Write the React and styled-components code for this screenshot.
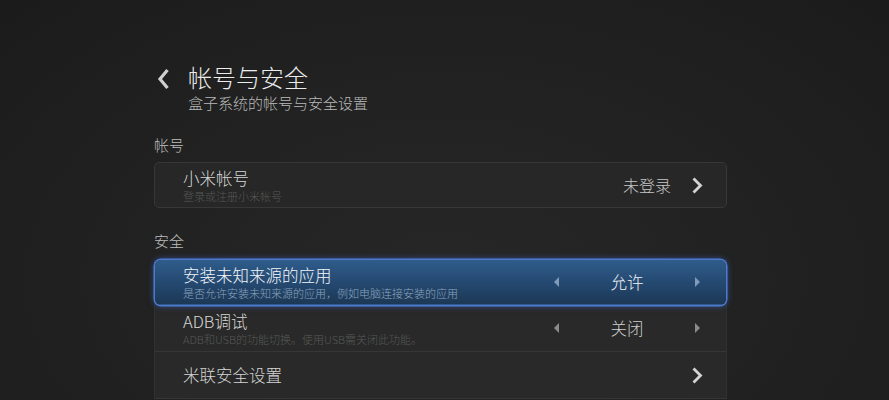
import React from "react";
import styled, { createGlobalStyle } from "styled-components";

const GlobalStyle = createGlobalStyle`
  html, body {
    margin: 0;
    padding: 0;
    background: #1f201f;
  }
  body {
    font-family: "Noto Sans CJK SC", "Noto Sans", sans-serif;
    font-weight: 300;
  }
`;

const Screen = styled.div`
  width: 889px;
  height: 400px;
  overflow: hidden;
  background: radial-gradient(ellipse at 50% 70%, #262726 0%, #202120 55%, #1a1b1a 100%);
  box-sizing: border-box;
  padding: 62px 0 0 154px;
`;

const Content = styled.div`
  width: 573px;
  display: flex;
  flex-direction: column;
`;

const Header = styled.div`
  display: flex;
  align-items: flex-start;
  gap: 18px;
  margin-left: 3px;
`;

const BackIcon = styled.svg`
  width: 13px;
  height: 22px;
  margin-top: 6px;
`;

const HeaderText = styled.div`
  display: flex;
  flex-direction: column;
`;

const Title = styled.div`
  font-size: 24px;
  line-height: 30px;
  color: #ececec;
`;

const Subtitle = styled.div`
  font-size: 15px;
  line-height: 20px;
  color: #b9b9b9;
  margin-top: 1px;
`;

const SectionLabel = styled.div`
  font-size: 15px;
  line-height: 20px;
  color: #bdbdbd;
  margin-top: ${(p) => p.$top || "22px"};
  margin-bottom: ${(p) => p.$bottom || "7px"};
`;

const Card = styled.div`
  display: flex;
  align-items: center;
  height: 46px;
  box-sizing: border-box;
  padding: 0 23px 0 28px;
  background: #262726;
  border: 1px solid #363736;
  border-radius: 5px;
`;

const Group = styled.div`
  display: flex;
  flex-direction: column;
  background: #282928;
  border-left: 1px solid #303130;
  border-right: 1px solid #303130;
`;

const Row = styled.div`
  display: flex;
  align-items: center;
  height: ${(p) => (p.$focused ? "45px" : "47px")};
  box-sizing: border-box;
  padding: 0 23px 0 28px;
  border-bottom: 1px solid ${(p) => (p.$focused ? "transparent" : "#353635")};
  border-radius: ${(p) => (p.$focused ? "6px" : "0")};
  background: ${(p) =>
    p.$focused
      ? "linear-gradient(180deg, #2f5c8b 0%, #24486f 55%, #1c3856 100%)"
      : "transparent"};
  box-shadow: ${(p) =>
    p.$focused
      ? "0 0 0 1.5px #4b7ad0, 0 0 6px 1px rgba(70, 110, 230, 0.6)"
      : "none"};
  position: relative;
  z-index: ${(p) => (p.$focused ? 1 : 0)};
`;

const Texts = styled.div`
  flex: 1;
  display: flex;
  flex-direction: column;
`;

const ItemTitle = styled.div`
  font-size: 16.5px;
  line-height: 20px;
  color: ${(p) => (p.$focused ? "#f4f6f8" : "#d6d6d6")};
`;

const ItemSub = styled.div`
  font-size: 11px;
  line-height: 14px;
  margin-top: 1px;
  color: ${(p) => (p.$focused ? "#8ea4bd" : "#575857")};
`;

const Status = styled.div`
  font-size: 16px;
  color: #c8c8c8;
  margin-right: 20px;
`;

const Chevron = styled.svg`
  width: 12px;
  height: 17px;
`;

const Selector = styled.div`
  display: flex;
  align-items: center;
  justify-content: space-between;
  width: 146px;
  margin-right: 3px;
`;

const Value = styled.div`
  font-size: 16.5px;
  color: ${(p) => (p.$focused ? "#f2f4f6" : "#cfcfcf")};
`;

const Arrow = styled.svg`
  width: 5px;
  height: 10px;
`;

const ChevronRight = () => (
  <Chevron viewBox="0 0 12 17">
    <path d="M2.5 1.5 L9.5 8.5 L2.5 15.5" fill="none" stroke="#d4d4d4" strokeWidth="2.8" />
  </Chevron>
);

const SelectArrow = ({ dir, color }) => (
  <Arrow viewBox="0 0 5 10">
    {dir === "left" ? (
      <path d="M5 0 L0 5 L5 10 Z" fill={color} />
    ) : (
      <path d="M0 0 L5 5 L0 10 Z" fill={color} />
    )}
  </Arrow>
);

const SelectRow = ({ title, sub, value, focused }) => {
  const arrowColor = focused ? "#7f9bb8" : "#8a8b8a";
  return (
    <Row $focused={focused}>
      <Texts>
        <ItemTitle $focused={focused}>{title}</ItemTitle>
        <ItemSub $focused={focused}>{sub}</ItemSub>
      </Texts>
      <Selector>
        <SelectArrow dir="left" color={arrowColor} />
        <Value $focused={focused}>{value}</Value>
        <SelectArrow dir="right" color={arrowColor} />
      </Selector>
    </Row>
  );
};

export default function App() {
  return (
    <Screen>
      <GlobalStyle />
      <Content>
        <Header>
          <BackIcon viewBox="0 0 13 22">
            <path d="M10.5 2 L3 11 L10.5 20" fill="none" stroke="#cfcfcf" strokeWidth="3.2" />
          </BackIcon>
          <HeaderText>
            <Title>帐号与安全</Title>
            <Subtitle>盒子系统的帐号与安全设置</Subtitle>
          </HeaderText>
        </Header>

        <SectionLabel>帐号</SectionLabel>
        <Card>
          <Texts>
            <ItemTitle>小米帐号</ItemTitle>
            <ItemSub>登录或注册小米帐号</ItemSub>
          </Texts>
          <Status>未登录</Status>
          <ChevronRight />
        </Card>

        <SectionLabel $top="23px" $bottom="9px">安全</SectionLabel>
        <Group>
          <SelectRow
            focused
            title="安装未知来源的应用"
            sub="是否允许安装未知来源的应用，例如电脑连接安装的应用"
            value="允许"
          />
          <SelectRow
            title="ADB调试"
            sub="ADB和USB的功能切换。使用USB需关闭此功能。"
            value="关闭"
          />
          <Row>
            <Texts>
              <ItemTitle>米联安全设置</ItemTitle>
            </Texts>
            <ChevronRight />
          </Row>
        </Group>
      </Content>
    </Screen>
  );
}
